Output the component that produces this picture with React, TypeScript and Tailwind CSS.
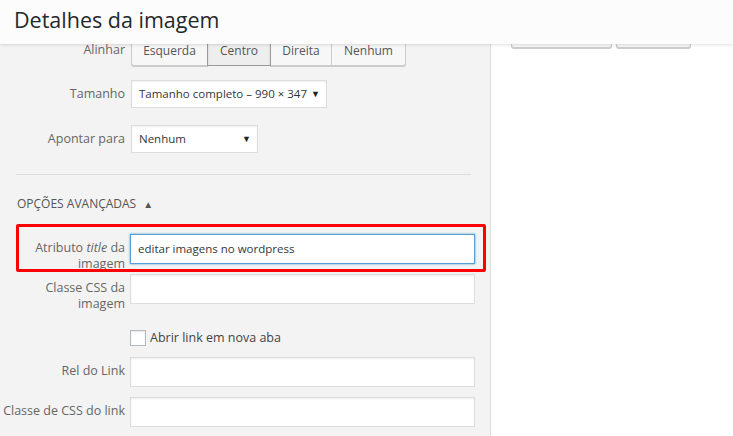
import React from 'react';

const font = { fontFamily: '"Open Sans", "Noto Sans", sans-serif' };

const Label = ({ children }: { children: React.ReactNode }) => (
  <div className="w-[130px] shrink-0 pr-[5px] pt-[6px] text-right text-[12.5px] leading-[16px] text-[#666]">
    {children}
  </div>
);

const TextInput = ({ value, focused }: { value?: string; focused?: boolean }) => (
  <div
    className={
      'flex h-[30px] w-[345px] items-center border bg-white px-[7px] text-[11.5px] text-[#32373c] ' +
      (focused
        ? 'border-[#5b9dd9] shadow-[0_0_2px_rgba(30,140,190,0.8)]'
        : 'border-[#ddd] shadow-[inset_0_1px_2px_rgba(0,0,0,0.07)]')
    }
  >
    {value}
  </div>
);

const Select = ({ value, width, pad }: { value: string; width: string; pad: string }) => (
  <div
    className={
      'ml-px flex h-[28px] items-center justify-between gap-[4px] whitespace-nowrap border border-[#ddd] bg-white pl-[7px] text-[11.5px] text-[#32373c] shadow-[inset_0_1px_2px_rgba(0,0,0,0.07)] ' +
      width +
      ' ' +
      pad
    }
  >
    <span>{value}</span>
    <span className="text-[9px] text-[#222]">▼</span>
  </div>
);

const alignButtons = ['Esquerda', 'Centro', 'Direita', 'Nenhum'];
const alignWidths = ['w-[77px]', 'w-[64px]', 'w-[62px]', 'w-[75px]'];

export default function App() {
  return (
    <div className="relative h-[436px] w-[733px] overflow-hidden bg-white" style={font}>
      {/* sticky header */}
      <div className="relative z-10 h-[44px] bg-[#fcfcfc] pl-[14px] shadow-[0_1px_3px_rgba(0,0,0,0.13)]">
        <h1 className="text-[21.5px] leading-[40px] text-[#23282d]">Detalhes da imagem</h1>
      </div>

      <div className="flex h-[392px]">
        <div className="w-[491px] shrink-0 border-r border-[#ddd] bg-[#f3f3f3]">
          {/* Alinhar */}
          <div className="mt-[-8px] flex">
            <div className="w-[130px] shrink-0 pr-[5px] pt-[6px] text-right text-[12.5px] leading-[16px] text-[#666]">
              Alinhar
            </div>
            <div className="ml-px flex h-[30px]">
              {alignButtons.map((b, i) => (
                <div
                  key={b}
                  className={
                    'flex items-end justify-center border pb-[6px] text-[12px] leading-[16px] text-[#555] ' +
                    alignWidths[i] +
                    (i > 0 ? ' -ml-px' : '') +
                    (b === 'Centro'
                      ? ' relative z-[1] border-[#999] bg-[#eee] pb-[4px] shadow-[inset_0_2px_5px_-3px_rgba(0,0,0,0.5)]'
                      : ' border-[#ccc] bg-[#f7f7f7] shadow-[0_1px_0_#ccc]') +
                    (i === 0 ? ' rounded-bl-[3px]' : '') +
                    (i === 3 ? ' rounded-br-[3px]' : '')
                  }
                >
                  {b}
                </div>
              ))}
            </div>
          </div>

          {/* Tamanho */}
          <div className="mt-[14px] flex">
            <Label>Tamanho</Label>
            <Select value="Tamanho completo – 990 × 347" width="w-[196px]" pad="pr-[9px]" />
          </div>

          {/* Apontar para */}
          <div className="mt-[17px] flex">
            <Label>Apontar para</Label>
            <Select value="Nenhum" width="w-[127px]" pad="pr-[6px]" />
          </div>

          <div className="ml-[16px] mt-[21px] w-[455px] border-t border-[#ddd]" />

          <div className="ml-[17px] mt-[20px] flex items-center gap-[7px] text-[12px] leading-[18px] text-[#555]">
            <span>OPÇÕES AVANÇADAS</span>
            <span className="text-[10px]">▲</span>
          </div>

          {/* Atributo title */}
          <div className="mt-[21px] flex">
            <Label>
              Atributo <i>title</i> da
              <br />
              imagem
            </Label>
            <TextInput value="editar imagens no wordpress" focused />
          </div>

          <div className="mt-[2px] flex">
            <Label>
              Classe CSS da
              <br />
              imagem
            </Label>
            <TextInput />
          </div>

          <div className="mt-[18px] flex items-center pl-[130px]">
            <div className="h-[16px] w-[16px] border border-[#b4b9be] bg-white shadow-[inset_0_1px_2px_rgba(0,0,0,0.1)]" />
            <span className="ml-[4px] text-[12.5px] leading-[16px] text-[#444]">Abrir link em nova aba</span>
          </div>

          <div className="mt-[11px] flex">
            <Label>Rel do Link</Label>
            <TextInput />
          </div>

          <div className="mt-[10px] flex">
            <Label>Classe de CSS do link</Label>
            <TextInput />
          </div>
        </div>

        <div className="flex-1 bg-white">
          <div className="ml-[20px] mt-[-20px] flex gap-[4px]">
            <div className="h-[24px] w-[101px] rounded-[3px] border border-[#ccc] bg-[#f7f7f7] shadow-[0_1px_0_#ccc]" />
            <div className="h-[24px] w-[75px] rounded-[3px] border border-[#ccc] bg-[#f7f7f7] shadow-[0_1px_0_#ccc]" />
          </div>
        </div>
      </div>

      {/* red highlight annotation */}
      <div className="absolute left-[16px] top-[224px] h-[48px] w-[470px] rounded-[2px] border-[3px] border-[#ff0000]" />
    </div>
  );
}
